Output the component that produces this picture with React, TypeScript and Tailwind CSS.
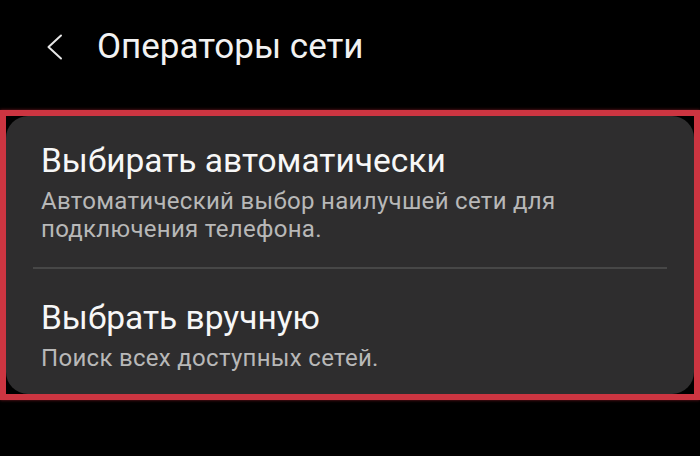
export default function App() {
  return (
    <div
      className="flex h-[456px] w-[700px] flex-col bg-black"
      style={{ fontFamily: "Roboto, 'Noto Sans', sans-serif" }}
    >
      <header className="flex h-[110px] items-center pb-[17px]">
        <svg className="ml-[45px] h-[26px] w-[18px]" viewBox="0 0 18 26" fill="none">
          <path d="M16 1.5 L3.5 13 L16 24.5" stroke="#e6e6e6" strokeWidth="2" strokeLinecap="round" strokeLinejoin="round" />
        </svg>
        <h1 className="ml-[34px] text-[35px] leading-[35px] font-normal text-[#f2f2f2]">Операторы сети</h1>
      </header>
      <div className="h-[290px] border-[6px] border-[#cc3541] bg-black shadow-[0_0_3px_#7a1a22]">
        <div className="h-full rounded-[22px] bg-[#2e2d2e] pt-[25px]">
          <div className="px-[35px]">
            <div className="text-[33.5px] leading-[40px] text-[#f7f7f7]">Выбирать автоматически</div>
            <div className="mt-[6px] text-[24px] leading-[28px] tracking-[0.3px] text-[#b8b8b8]">
              Автоматический выбор наилучшей сети для
              <br />
              подключения телефона.
            </div>
          </div>
          <div className="mx-[27px] mt-[24px] h-[2px] bg-[#474747]" />
          <div className="px-[35px] pt-[29px]">
            <div className="text-[33.5px] leading-[40px] text-[#f7f7f7]">Выбрать вручную</div>
            <div className="mt-[6px] text-[24px] leading-[28px] tracking-[0.3px] text-[#b8b8b8]">
              Поиск всех доступных сетей.
            </div>
          </div>
        </div>
      </div>
    </div>
  );
}
